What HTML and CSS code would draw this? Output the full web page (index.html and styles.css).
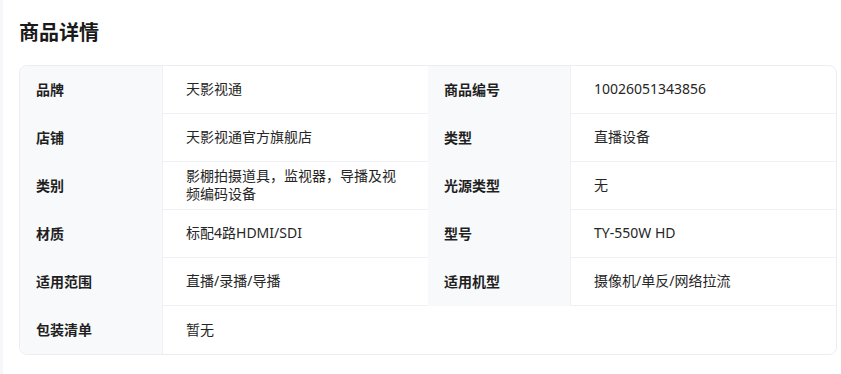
FILE: index.html
```html
<!DOCTYPE html>
<html lang="zh-CN">
<head>
<meta charset="utf-8">
<title>商品详情</title>
<link rel="stylesheet" href="styles.css">
</head>
<body>
<div class="panel">
  <h2 class="title">商品详情</h2>
  <div class="spec">
    <div class="lbl">品牌</div><div class="val">天影视通</div>
    <div class="lbl">商品编号</div><div class="val">10026051343856</div>
    <div class="lbl">店铺</div><div class="val">天影视通官方旗舰店</div>
    <div class="lbl">类型</div><div class="val">直播设备</div>
    <div class="lbl">类别</div><div class="val">影棚拍摄道具，监视器，导播及视频编码设备</div>
    <div class="lbl">光源类型</div><div class="val">无</div>
    <div class="lbl">材质</div><div class="val">标配4路HDMI/SDI</div>
    <div class="lbl">型号</div><div class="val">TY-550W HD</div>
    <div class="lbl">适用范围</div><div class="val">直播/录播/导播</div>
    <div class="lbl">适用机型</div><div class="val">摄像机/单反/网络拉流</div>
    <div class="lbl">包装清单</div><div class="val val-wide last">暂无</div>
  </div>
</div>
</body>
</html>
```

FILE: styles.css
```css
html, body {
  margin: 0;
  padding: 0;
}
body {
  background: #f6f7f9;
  font-family: "Noto Sans", "Noto Sans CJK SC", sans-serif;
  height: 374px;
  overflow: hidden;
}
.panel {
  margin-left: 3px;
  background: #ffffff;
  height: 374px;
  padding: 19px 4px 0 16px;
  box-sizing: border-box;
}
.title {
  margin: 0 0 18px 0;
  font-size: 20px;
  line-height: 28px;
  font-weight: 700;
  color: #1a1a1a;
}
.spec {
  width: 816px;
  display: grid;
  grid-template-columns: 143px 265px 143px 265px;
  border: 1px solid #ebedf0;
  border-radius: 8px;
  overflow: hidden;
}
.lbl {
  background: #f8f9fb;
  border-right: 1px solid #eff1f4;
  box-sizing: border-box;
  height: 48px;
  padding: 0 16px 3px 16px;
  display: flex;
  align-items: center;
  font-size: 14px;
  font-weight: 700;
  color: #1f1f1f;
}
.val {
  box-sizing: border-box;
  min-height: 48px;
  padding: 0 24px 1px 23px;
  border-bottom: 1px solid #eff1f4;
  display: flex;
  align-items: center;
  font-size: 14px;
  line-height: 18px;
  color: #262626;
}
.val-wide {
  grid-column: span 3;
}
.val.last {
  border-bottom: none;
}
```
